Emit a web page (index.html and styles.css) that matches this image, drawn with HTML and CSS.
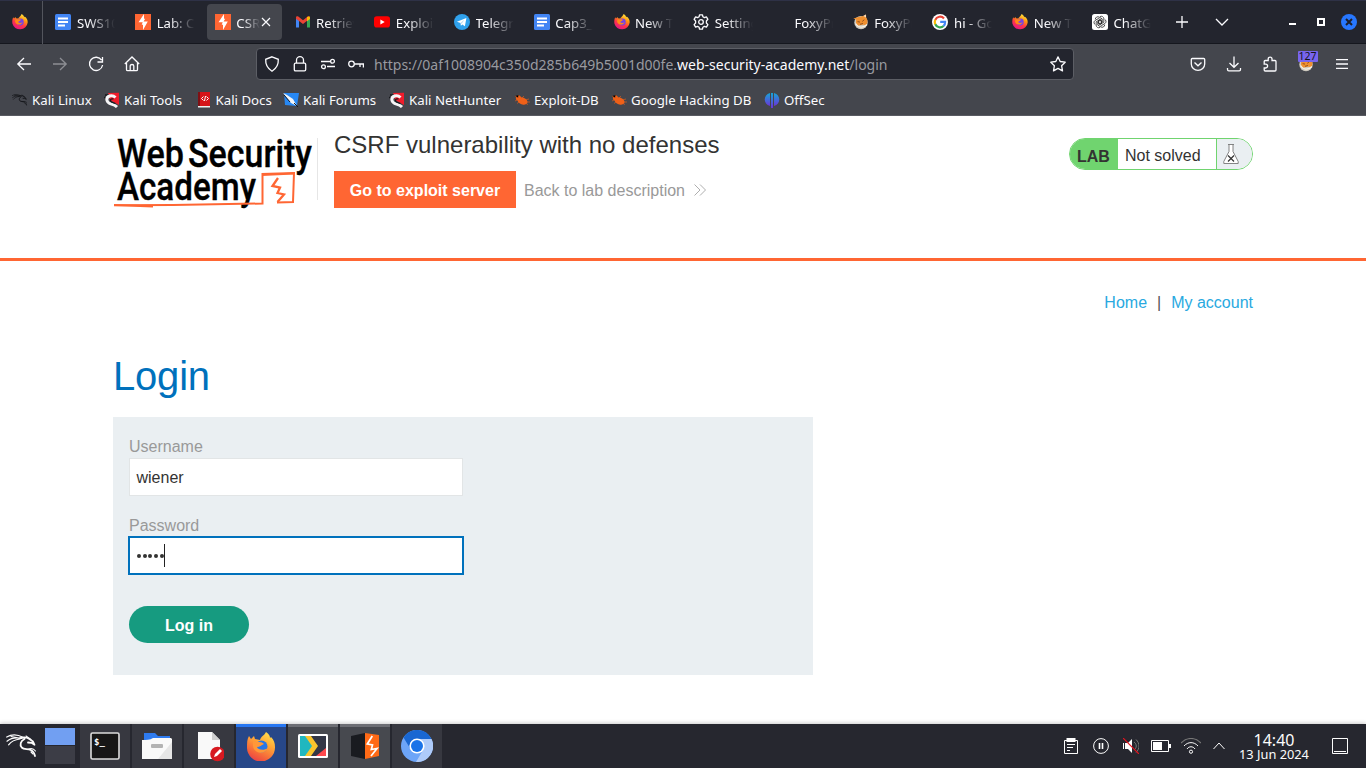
FILE: index.html
```html
<!DOCTYPE html>
<html lang="en">
<head>
<meta charset="utf-8">
<title>CSRF vulnerability with no defenses</title>
<link rel="stylesheet" href="styles.css">
</head>
<body>
<svg class="sprite" aria-hidden="true">
<defs>
<linearGradient id="fxg" x1=".8" y1="0" x2=".3" y2="1"><stop offset="0" stop-color="#fff44f"/><stop offset=".35" stop-color="#ff980e"/><stop offset=".65" stop-color="#ff3647"/><stop offset="1" stop-color="#e31587"/></linearGradient>
<linearGradient id="fxb" x1=".8" y1="0" x2=".3" y2="1"><stop offset="0" stop-color="#ffe14c"/><stop offset=".4" stop-color="#ffa436"/><stop offset=".8" stop-color="#f4603b"/><stop offset="1" stop-color="#e8424a"/></linearGradient>
<linearGradient id="offg" x1="0" y1="0" x2="0" y2="1"><stop offset="0" stop-color="#16a5d8"/><stop offset="1" stop-color="#6a35d8"/></linearGradient>
<symbol id="firefox" viewBox="0 0 16 16"><path fill="url(#fxg)" d="M1.2 3.2 2 4.4 3.5 3 4 4.2 6.2 4.6C7.3 2.6 8.6 2.6 9.6 0c1.7 1 2.3 2.2 2.7 3.3l.4-.8c2.2 1.6 3.1 3.8 3 6A7.8 7.8 0 0 1 .4 9.5C.1 7.2.3 5 1.2 3.2Z"/><circle cx="8.300" cy="8" r="3.400" fill="#7542e5"/><path fill="#ff8a16" d="M3.500 5.400 6.500 5.300c1.500-.3 2.100.3 2.500.8-1 .4-1.600 1.600-2.900 1.700.5 1.500 3 1.500 4.500.4-1.500 3.600-7 3-7.600-.7Z"/></symbol>
<symbol id="firefox-flat" viewBox="0 0 30 30"><path fill="url(#fxb)" d="M3 5l2 3 3-3 1 3 5 1c1-4 4-4 6-8 3 2 4 4 4 6l1-1c3 3 4 6 4 10A14 14 0 0 1 1 17C1 12 1 8 3 5Z"/><circle cx="15.500" cy="15.500" r="6" fill="#2877e8"/><path fill="#ff9838" d="M7 10l5 1c4 0 5 1 6 2-3 1-4 3-7 3 1 3 7 4 11 1-3 7-14 6-15-2Z"/></symbol>
<symbol id="gdoc" viewBox="0 0 16 16"><rect width="16" height="16" rx="1.5" fill="#4285f4"/><path d="M3 4.500h10M3 8h10M3 11.500h7" stroke="#fff" stroke-width="1.800"/></symbol>
<symbol id="burp" viewBox="0 0 16 16"><rect width="16" height="16" fill="#ff6633"/><path d="M9 0 3.500 8.300H7.700L6.700 10.800H8V16L12.800 7.400H8.600L10.200 4.800H9Z" fill="#fff"/></symbol>
<symbol id="gmail" viewBox="0 0 16 16"><path d="M1 13.500V4l3 2.300v7.200z" fill="#4285f4"/><path d="M12 13.500V6.300L15 4v9.500z" fill="#34a853"/><path d="M1 3.500C1 2 2.500 2 3.300 2.600L8 6.200l4.700-3.600c.8-.6 2.300-.6 2.300.9v1L8 10 1 4.700Z" fill="#ea4335"/><path d="M12 3.100c1-.9 3-1.100 3 .6V5l-3 2.300z" fill="#fbbc04"/></symbol>
<symbol id="youtube" viewBox="0 0 16 16"><rect y="2.300" width="16" height="11.200" rx="2.800" fill="#f00"/><path d="M6.400 5.500v5L10.700 8z" fill="#fff"/></symbol>
<symbol id="telegram" viewBox="0 0 16 16"><circle cx="8" cy="8" r="8" fill="#30a1ec"/><path d="M2.900 7.800 12.400 4l-1.500 8.300-2.600-1.900-1.400 1.400-.4-2.700Z" fill="#fff"/><path d="m6.500 9 3.800-3.200-2.600 3.900z" fill="#b8d8ed"/></symbol>
<symbol id="gear" viewBox="0 0 16 16"><g fill="none" stroke="#fbfbfe" stroke-width="1.300" stroke-linejoin="round"><circle cx="8" cy="8" r="2.300"/><path d="m6.500.8h3l.4 2 1.500.8 2-.8 1.500 2.500L13.400 7v2l1.500 1.600-1.500 2.500-2-.700-1.500.8-.4 2h-3l-.4-2-1.500-.8-2 .7-1.500-2.500L2.600 9V7L1.100 5.300l1.500-2.500 2 .8 1.500-.8Z"/></g></symbol>
<symbol id="foxy" viewBox="0 0 16 16"><circle cx="8" cy="8.600" r="6.700" fill="#cfcac0"/><path d="M.3 4.600 5.500 3 10.200 2 13 .4 13.200 3.400C15.200 6 14.800 10 12.500 12 10.500 8.500 6 13.500 3.500 10.200 2.500 9 3.200 6.500 3.200 5.600Z" fill="#f09030"/><path d="M10.200 2 13 .4v3Z" fill="#f4dcc0"/><path d="m4.600 7.600 2.400.5M9.300 7.400l2-1.700M7 10.300l3-.8" stroke="#8a4a18" stroke-width=".9"/><path d="M2.500 9.500c2.500 4.500 8 4.800 11.500 1" fill="none" stroke="#f8efe0" stroke-width="1.200"/></symbol>
<symbol id="google" viewBox="0 0 16 16"><circle cx="8" cy="8" r="8" fill="#fff"/><g fill="none" stroke-width="2.200"><path d="M12 4.400A5.200 5.200 0 0 0 3.300 5.900" stroke="#ea4335"/><path d="M3.300 5.700a5.200 5.200 0 0 0 0 4.700" stroke="#fbbc05"/><path d="M3.300 10.200a5.200 5.200 0 0 0 8.300 1.800" stroke="#34a853"/><path d="M11.500 12c1.200-1 1.700-2.500 1.600-4.100H8.200" stroke="#4285f4"/></g></symbol>
<symbol id="gpt" viewBox="0 0 16 16"><rect width="16" height="16" rx="2.500" fill="#fff"/><g fill="none" stroke="#222" stroke-width=".75"><path id="petal" d="M8 2.600c1.600-1 3.800.1 3.800 2.200v3.500L8.700 10 5.500 8.200"/><use href="#petal" transform="rotate(60 8 8)"/><use href="#petal" transform="rotate(120 8 8)"/><use href="#petal" transform="rotate(180 8 8)"/><use href="#petal" transform="rotate(240 8 8)"/><use href="#petal" transform="rotate(300 8 8)"/></g></symbol>
<symbol id="dragon" viewBox="0 0 32 28"><g fill="none" stroke="currentColor" stroke-linecap="round" stroke-linejoin="round"><path stroke-width="1.200" d="M.7 5C5 2.400 11 2 17 5.300M1 9.200C5 6 10 5.200 16 6.500M2.600 12.800C5 9.500 9 7.500 14 7M5 4.500l8 1.500"/><path stroke-width="1.800" d="M14 6c4-1.200 7-.8 9 .8l4 2.700 1.500 3.300-3-2-3.500-.3M18.500 7c-4 2-5 6-2.800 8.500 2.500 2.500 6 .7 9 2.500 2.500 1.200 3.800 3.500 4.300 6"/><path stroke-width="1.100" d="M20 4l5 3.500M22 17.500c3-1.500 6-.5 7.500 1.500M25 20l2 2"/></g></symbol>
<symbol id="ktool" viewBox="0 0 16 16"><path d="m4 1 11-.2V13L6 8Z" fill="#ef1c2b"/><path d="M1 3h4M0 5.500h3" stroke="#17181d" stroke-width="1.500"/><path d="M11.500 5.500C8 2 2 4 3 8.500 4 13 9 11 13 15" fill="none" stroke="#f5f5f7" stroke-width="3"/><path d="M9.500 7c-3.500-1-4 2.500-1 3.500l3 1" fill="none" stroke="#17181d" stroke-width="1.200"/></symbol>
<symbol id="kdocs" viewBox="0 0 14 16"><path d="M1 0h12v14H1z" fill="#d51419"/><path d="M1 0h2v15H1z" fill="#801014"/><path d="M1 14h12v1.500H1z" fill="#eee"/><path d="m6.500 4.500-2 2 2 2m3-4 2 2-2 2M8.500 4 7.500 9" stroke="#fff" fill="none"/></symbol>
<symbol id="kforum" viewBox="0 0 16 16"><path d="M1 1h15L14 14 2 13Z" fill="#2788f4"/><path d="m0 1 4 2 6 4 4 7-6-3-4-5z" fill="#f2f5f8"/><path d="m1 3 6 7M11 11l4 4" stroke="#16181d"/></symbol>
<symbol id="bug" viewBox="0 0 16 16"><g fill="#ef6018"><ellipse cx="8.500" cy="9" rx="5.200" ry="3.400" transform="rotate(20 8.500 9)"/><circle cx="4.500" cy="6" r="2.600"/></g><path d="m1 4 3 2L5 3m3 3 2-2m1 4 4-1m-2 3 3 0M3 8 1 9m4 1-2 1.500m6 0v1m3-1 2 1" stroke="#ef6018" stroke-width=".6"/></symbol>
<symbol id="offsec" viewBox="0 0 16 16"><g fill="url(#offg)"><path d="M6 1v13C-1 12-1 3 6 1Z"/><path d="M7 1h2v15H7z"/><path d="M10 1v13c7-2 7-11 0-13Z"/></g></symbol>
</defs>
</svg>

<header class="browser">
 <div class="tabs">
  <div class="pinned"><svg class="i16"><use href="#firefox"/></svg></div>
  <div class="tab"><svg class="i16"><use href="#gdoc"/></svg><span>SWS101</span></div>
  <div class="tab"><svg class="i16"><use href="#burp"/></svg><span>Lab: CSRF</span></div>
  <div class="tab active"><svg class="i16"><use href="#burp"/></svg><span class="short">CSRF</span><svg class="close" viewBox="0 0 10 10"><path d="m1 1 8 8m0-8-8 8"/></svg></div>
  <div class="tab"><svg class="i16"><use href="#gmail"/></svg><span>Retrieve</span></div>
  <div class="tab"><svg class="i16"><use href="#youtube"/></svg><span>Exploit</span></div>
  <div class="tab"><svg class="i16"><use href="#telegram"/></svg><span>Telegram</span></div>
  <div class="tab"><svg class="i16"><use href="#gdoc"/></svg><span>Cap3_s</span></div>
  <div class="tab"><svg class="i16"><use href="#firefox"/></svg><span>New Tab</span></div>
  <div class="tab"><svg class="i16"><use href="#gear"/></svg><span>Settings</span></div>
  <div class="tab"><svg class="i16"></svg><span>FoxyProxy</span></div>
  <div class="tab"><svg class="i16"><use href="#foxy"/></svg><span>FoxyProxy</span></div>
  <div class="tab"><svg class="i16"><use href="#google"/></svg><span>hi - Google</span></div>
  <div class="tab"><svg class="i16"><use href="#firefox"/></svg><span>New Tab</span></div>
  <div class="tab"><svg class="i16"><use href="#gpt"/></svg><span>ChatGPT</span></div>
  <div class="tabtools">
   <svg class="line" width="12" height="12" viewBox="0 0 12 12"><path d="M6 0v12M0 6h12"/></svg>
   <svg class="line chev" width="14" height="8" viewBox="0 0 14 8"><path d="m1 1 6 6 6-6"/></svg>
  </div>
  <div class="winctl">
   <i class="min"></i><i class="max"></i>
   <svg width="16" height="16" viewBox="0 0 16 16"><circle cx="8" cy="8" r="8" fill="#2777ff"/><path d="m5 5 6 6m0-6-6 6" stroke="#1d1f29" stroke-width="2"/></svg>
  </div>
 </div>

 <div class="toolbar">
  <div class="tb"><svg class="line i16" viewBox="0 0 16 16"><path d="M15 8H2m6-6L1.800 8 8 14"/></svg></div>
  <div class="tb dim"><svg class="line i16" viewBox="0 0 16 16"><path d="M1 8h13M8 2l6.200 6L8 14"/></svg></div>
  <div class="tb"><svg class="line i16" viewBox="0 0 16 16"><path d="M13.600 4.200A6.600 6.600 0 1 0 14.600 9M14.500 1v5h-5"/></svg></div>
  <div class="tb"><svg class="line i16" viewBox="0 0 16 16"><path d="M.8 8 8 1l7.200 7M2.500 7v6.500c0 .8.500 1.200 1.200 1.200h8.600c.7 0 1.200-.4 1.200-1.200V7M6.200 14.500V10c0-2 3.600-2 3.600 0v4.500"/></svg></div>
  <div class="urlbar">
   <svg class="line i16" viewBox="0 0 16 16"><path d="m8 .8 6.300 2.500c.3 5-1.600 9-6.300 11.900C3.300 12.300 1.400 8.300 1.700 3.300Z"/></svg>
   <svg class="line i16" viewBox="0 0 16 16"><path d="M4.500 7V4.200a3.500 3.500 0 0 1 7 0V7M3.500 7.200h9c.8 0 1.200.5 1.200 1.200v5.200c0 .8-.4 1.300-1.200 1.300h-9c-.8 0-1.200-.5-1.200-1.300V8.400c0-.7.400-1.200 1.200-1.200Z"/></svg>
   <svg class="line i16" viewBox="0 0 16 16"><path d="M1 5.500h9M7 10.500h8"/><circle cx="12.500" cy="5.200" r="1.900"/><circle cx="3.500" cy="10.800" r="1.900"/></svg>
   <svg class="line i16 key" viewBox="0 0 16 16"><circle cx="3.500" cy="8" r="2.800"/><path d="M6.300 8H15.400v3.500M12 8v3"/></svg>
   <div class="url">https://0af1008904c350d285b649b5001d00fe.<b>web-security-academy.net</b>/login</div>
   <svg class="line i16 star" viewBox="0 0 16 16"><path stroke-linejoin="round" d="m8 .9 2.200 4.600 5 .7-3.600 3.500.9 5.200L8 12.400l-4.500 2.500.9-5.200L.8 6.200l5-.7Z"/></svg>
  </div>
  <div class="tb ext"><svg class="line i16" viewBox="0 0 16 16"><path d="M2.300 2.500h11.400c.7 0 1 .4 1 1V8a6.700 6.300 0 0 1-13.400 0V3.500c0-.6.300-1 1-1ZM4.500 6.500 8 9.800l3.500-3.300"/></svg></div>
  <div class="tb"><svg class="line i16" viewBox="0 0 16 16"><path d="M8 .5V11M3.500 7 8 11.300 12.500 7M1.500 12v1.500c0 .8.500 1.300 1.300 1.300h10.400c.8 0 1.300-.5 1.300-1.300V12"/></svg></div>
  <div class="tb"><svg class="line i16" viewBox="0 0 16 16"><path d="M2.200 8.200V5.500c0-.6.400-1 1-1h3V3c0-2.500 3.800-2.500 3.800 0v1.500h3c.6 0 1 .4 1 1V14c0 .6-.4 1-1 1H3.200c-.6 0-1-.4-1-1v-2h1.500c2.500 0 2.500-3.800 0-3.800Z"/></svg></div>
  <div class="tb foxbtn"><svg class="i16"><use href="#foxy"/></svg><em>127</em></div>
  <div class="tb"><svg class="line" width="12" height="10" viewBox="0 0 12 10"><path d="M0 .6h12M0 5h12M0 9.400h12"/></svg></div>
 </div>

 <div class="bookmarks">
  <div><svg class="i16 black"><use href="#dragon"/></svg>Kali Linux</div>
  <div><svg class="i16"><use href="#ktool"/></svg>Kali Tools</div>
  <div><svg class="i16"><use href="#kdocs"/></svg>Kali Docs</div>
  <div><svg class="i16"><use href="#kforum"/></svg>Kali Forums</div>
  <div><svg class="i16"><use href="#ktool"/></svg>Kali NetHunter</div>
  <div><svg class="i16"><use href="#bug"/></svg>Exploit-DB</div>
  <div><svg class="i16"><use href="#bug"/></svg>Google Hacking DB</div>
  <div><svg class="i16"><use href="#offsec"/></svg>OffSec</div>
 </div>
</header>

<main class="page">
 <div class="labhead">
  <svg class="logo" viewBox="0 0 204 80" width="204" height="80">
   <g class="logotext"><text x="4" y="30" textLength="67" lengthAdjust="spacingAndGlyphs">Web</text><text x="75" y="30" textLength="124" lengthAdjust="spacingAndGlyphs">Security</text><text x="4" y="62.500" textLength="139" lengthAdjust="spacingAndGlyphs">Academy</text></g>
   <g fill="none" stroke="#ff6633" stroke-width="2"><path d="M1 68.300 60 68 149.500 66.500V37L181 36l-1 29-16 .5"/><path d="M1 68 40 69.500"/><path d="m149 38 32-1.500"/><path d="m165 41-5.500 8 7.500 1.500-2.500 5.500 6.500 1.500-6.500 7.500" stroke-width="2.300"/></g>
  </svg>
  <div class="title">
   <h2>CSRF vulnerability with no defenses</h2>
   <div class="actions"><a class="exploit">Go to exploit server</a><a class="back">Back to lab description</a><svg width="12" height="12" viewBox="0 0 12 12"><path d="m.5.500 5.500 5.500L.5 11.500M6 .5 11.500 6 6 11.500" fill="none" stroke="#999" stroke-width=".8"/></svg></div>
  </div>
  <div class="status"><b>LAB</b><span>Not solved</span><div class="flask"><svg width="16" height="20" viewBox="0 0 16 20"><path d="M5 .5h6M6 .5v7L.8 17.500v2h14.400v-2L10 7.500v-7" fill="#fff" stroke="#777" stroke-width=".9"/><path d="m5 11.500 6 6m0-6-6 6" stroke="#333" stroke-width="1.200"/></svg></div></div>
 </div>
 <section class="content">
  <nav><a>Home</a><i>|</i><a>My account</a></nav>
  <h1>Login</h1>
  <form class="login">
   <label>Username</label>
   <div class="field">wiener</div>
   <label>Password</label>
   <div class="field focus"><span class="dots"><s></s><s></s><s></s><s></s><s></s></span><span class="caret"></span></div>
   <div class="submit">Log in</div>
  </form>
 </section>
</main>

<footer class="taskbar">
 <svg class="kali" width="32" height="28"><use href="#dragon"/></svg>
 <div class="pager"><i></i><i></i></div>
 <div class="apps">
  <div><svg width="30" height="28" viewBox="0 0 30 28"><rect x="1" y="1" width="28" height="26" rx="1.500" fill="#171717" stroke="#dcdcdc" stroke-width="1.600"/><text x="4" y="13" class="prompt">$_</text></svg></div>
  <div><svg width="30" height="28" viewBox="0 0 30 28"><path d="M2 1h11l3 3h12v5H2z" fill="#2e7bf0"/><path d="M0 8c4 0 8 0 11-2h18l1 1v20H0z" fill="#f9f9f9"/><path d="M30 10v17H16z" fill="#e6e6e6"/><rect x="9" y="12" width="12" height="4" rx="1" fill="#b3b3b3"/></svg></div>
  <div><svg width="30" height="32" viewBox="0 0 30 32"><path d="M4 2h14l8 8v19H4z" fill="#f9f9f9"/><path d="M18 2v8h8z" fill="#cfcfcf"/><circle cx="23.500" cy="24" r="7.300" fill="#d71920"/><path d="m20 27 1-3 5-5 2 2-5 5z" fill="#fff"/></svg></div>
  <div class="current"><svg width="30" height="30"><use href="#firefox-flat"/></svg></div>
  <div class="open"><svg width="30" height="24" viewBox="0 0 30 24"><rect width="30" height="24" rx="1.500" fill="#fff"/><path d="M2 2h26v20H2z" fill="#333746"/><path d="M2 2h7l7 10-7 10H2z" fill="#20b7bf"/><path d="M7 2h6l7 10-7 10H7l7-10z" fill="#fac42c"/><path d="M28 14v8H18z" fill="#ff4b4f"/></svg></div>
  <div class="open"><svg width="30" height="28" viewBox="0 0 30 28"><path d="m1 4 14-3v26L1 24z" fill="#191b20"/><path d="m15 1 14 2v21l-14 3z" fill="#ff6a16"/><path d="m22.300 4-5 8 5.200 1-1.200 4.500 5.700-1L21 24" fill="none" stroke="#fff" stroke-width="1.700"/></svg></div>
  <div><svg width="32" height="32" viewBox="0 0 32 32"><circle cx="16" cy="16" r="16" fill="#6da5f8"/><path d="M2.500 7.500A16 16 0 0 1 30.500 9H16a7 7 0 0 0-6.500 10z" fill="#1967d2"/><path d="M30.500 9A16 16 0 0 1 15 32l7-12c2-4 0-8-3-11z" fill="#aecbfa"/><circle cx="16" cy="16" r="7.600" fill="#fff"/><circle cx="16" cy="16" r="6" fill="#1a73e8"/></svg></div>
 </div>
 <div class="tray">
  <svg width="14" height="16" viewBox="0 0 14 16"><path d="M.5 2.500h13v13H.5zM3 6.500h8M3 9.500h6M3 12.500h3" class="w"/><path d="M2.500 0h9v4h-9z" fill="#fff"/></svg>
  <svg width="16" height="16" viewBox="0 0 16 16"><circle cx="8" cy="8" r="7.400" class="w"/><path d="M6.500 5v6M9.500 5v6" fill="none" stroke="#fff" stroke-width="1.600"/></svg>
  <svg width="16" height="16" viewBox="0 0 16 16"><path d="M0 5h1v6H0zM2 5h3l4-4v14l-4-4H2z" fill="#fff"/><path d="M11 4c3 2 3 6 0 8M13 1.500c4 4 4 9 0 13" fill="none" stroke="#777"/><path d="M0 0 16 16" fill="none" stroke="#e8121e" stroke-width="1.200"/></svg>
  <svg width="20" height="12" viewBox="0 0 20 12"><path d="M.5.500h17v11H.5z" class="w"/><path d="M2 2h9v8H2zM18 4h2v4h-2z" fill="#fff"/></svg>
  <svg width="20" height="16" viewBox="0 0 20 16"><path d="M0 5C6-1 14-1 20 5" fill="none" stroke="#777" stroke-width="1.200"/><path d="M3 8c4-4.500 10-4.500 14 0M6 11c2-3 6-3 8 0" class="w"/><circle cx="10" cy="13.700" r="1.600" class="w"/></svg>
  <svg width="12" height="8" viewBox="0 0 12 8"><path d="m.5 7 5.500-6L11.500 7" class="w"/></svg>
 </div>
 <div class="clock"><strong>14:40</strong><small>13 Jun 2024</small></div>
 <svg class="desk" width="16" height="16" viewBox="0 0 16 16"><path d="M.5.500h15v15H.5zM2 13.500h12" class="w"/></svg>
</footer>
</body>
</html>
```
FILE: styles.css
```css
* { box-sizing: border-box; }
body { margin: 0; width: 1366px; height: 768px; overflow: hidden; display: flex; flex-direction: column; background: #fff; color: #333332; font: 16px "Liberation Sans", Arial, sans-serif; }
svg { display: block; flex: none; }
.sprite { position: absolute; width: 0; height: 0; }
.i16 { width: 16px; height: 16px; }
.line { fill: none; stroke: #fbfbfe; stroke-width: 1.3; }
.browser { height: 116px; flex: none; background: #44464d; color: #fbfbfe; font-family: "Noto Sans", sans-serif; border-bottom: 1px solid #595b62; }
.tabs { height: 44px; display: flex; align-items: center; background: #23252e; border-top: 1px solid #2e3146; border-bottom: 1px solid #15171e; }
.pinned { width: 43px; height: 43px; padding: 13px 0 0 12px; border-right: 1px solid #53555d; margin-right: 4.4px; }
.tab { width: 75.8px; margin-right: 3.95px; height: 36px; padding-left: 8px; display: flex; align-items: center; flex: none; font-size: 13.2px; border-radius: 4px; }
.tab span { width: 38px; margin-left: 5.5px; margin-top: 2px; overflow: hidden; white-space: nowrap; -webkit-mask-image: linear-gradient(90deg, #000 30%, transparent); mask-image: linear-gradient(90deg, #000 30%, transparent); }
.tab .short { width: 24px; }
.tab.active { background: #44464d; width: 75px; margin-right: 4.75px; }
.close { width: 10px; height: 10px; margin-left: .5px; stroke: #fbfbfe; stroke-width: 1.2; }
.tabtools { display: flex; align-items: center; margin-left: 12px; gap: 27px; }
.winctl { display: flex; align-items: center; margin-left: 60.6px; }
.min { width: 7px; height: 2px; background: #fff; margin: 4px 21px 0 0; }
.max { width: 8px; height: 8px; border: 2px solid #fff; margin-right: 16px; }
.toolbar { height: 40px; display: flex; align-items: center; padding-left: 6px; }
.tb { width: 36px; display: flex; justify-content: center; position: relative; }
.dim { opacity: .4; }
.ext { margin-left: 106px; }
.urlbar { width: 818px; height: 32px; margin-left: 106px; border: 1px solid #5c5e65; border-radius: 4px; background: #23252e; display: flex; align-items: center; padding-left: 7px; gap: 12px; }
.url { width: 664px; font-size: 14.02px; color: #999aa0; white-space: nowrap; margin-left: -2px; }
.url b { color: #fbfbfe; font-weight: 400; }
.foxbtn em { position: absolute; left: 9.5px; top: -5px; width: 20px; height: 11px; background: #7865ee; border-radius: 1px; color: #15141a; font: 10.5px/11px "Noto Sans", sans-serif; text-align: center; }
.bookmarks { display: grid; grid-template-columns: 92px 91.5px 87.5px 106px 125px 97px 153px 90px; padding-left: 12px; height: 32px; align-items: center; font-size: 13.25px; white-space: nowrap; }
.bookmarks div { display: flex; align-items: center; gap: 4px; }
.black { color: #111216; }
.page { flex: 1; min-height: 0; }
.labhead { height: 145px; border-bottom: 3px solid #ff6633; padding: 22px 113px 0; display: flex; align-items: flex-start; }
.logo { width: 204px; height: 80px; margin-top: -1px; }
.logotext { font: 500 39px Roboto, sans-serif; fill: #000; stroke: #000; stroke-width: .35px; }
.title { border-left: 1px solid #e6e6e6; height: 62px; padding-left: 16px; }
.title h2 { font-size: 24px; font-weight: 400; line-height: 28px; margin: -7px 0 11px; white-space: nowrap; }
.actions { display: flex; align-items: flex-start; color: #999; white-space: nowrap; height: 38px; }
.actions svg { margin-top: 14px; }
.exploit { width: 182px; height: 37px; line-height: 39px; background: #ff6633; color: #fff; font-weight: 700; text-align: center; margin: 1px 8px 0 0; }
.back { width: 170px; line-height: 41px; }
.status { margin-left: auto; width: 184px; height: 32px; border: 1px solid #70d46f; border-radius: 16px; display: flex; overflow: hidden; line-height: 34px; }
.status b { width: 48px; background: #70d46f; padding-left: 7px; line-height: 35px; }
.status span { width: 99px; padding-left: 7px; border-right: 1px solid #70d46f; }
.flask { flex: 1; background: #eaeff2; padding: 5px 0 0 6px; }
.content { padding: 32px 113px 0; }
nav { display: flex; justify-content: flex-end; color: #29a9df; line-height: 20px; }
nav i { color: #555; font-style: normal; margin: 0 10px; }
h1 { margin: 38px 0 16px; font-size: 40px; line-height: 50px; font-weight: 400; letter-spacing: -.2px; color: #0071bc; }
.login { width: 700px; height: 258px; padding: 20px 16px; background: #eaeff2; }
label { display: block; height: 21px; line-height: 20px; color: #999; }
.field { width: 334px; height: 38px; margin-bottom: 20px; padding: 2px 6.5px 0; border: 1px solid #e2e5e6; background: #fff; display: flex; align-items: center; }
.field.focus { outline: 2px solid #0071bc; outline-offset: -2px; width: 336px; height: 39px; margin: -1px -1px 31px; border: 0; padding: 0 0 0 9px; }
.dots { display: flex; gap: 1.7px; }
.dots s { width: 4px; height: 4px; border-radius: 50%; background: #333332; }
.caret { width: 1px; height: 23px; background: #222; }
.submit { width: 120px; height: 37px; line-height: 39px; border-radius: 19px; background: #169b80; color: #fff; text-align: center; font-weight: 700; }
.taskbar { height: 44px; flex: none; background: #26272f; color: #fcfcfc; display: flex; align-items: center; font-family: "Noto Sans", sans-serif; box-shadow: 0 -1px 4px rgba(0,0,0,.2); }
.kali { margin: 0 7px 0 6px; width: 32px; }
.pager { width: 30px; height: 36px; display: grid; grid-template-rows: 17px 18px; gap: 1px; }
.pager i { background: #3c3d46; }
.pager i:first-child { background: #719ff2; }
.apps { display: flex; gap: 2px; margin-left: 5px; }
.apps div { width: 50px; height: 44px; background: #373840; display: flex; align-items: center; justify-content: center; }
.apps .open { background: #47494f; box-shadow: inset 0 3px #6d6e74; }
.apps .current { background: #274788; box-shadow: inset 0 3px #2777f2; }
.prompt { font: 700 9px "DejaVu Sans Mono", monospace; fill: #fff; }
.tray { display: grid; grid-template-columns: repeat(5, 30px) 26px; justify-items: center; align-items: center; margin-left: 614px; }
.w { fill: none; stroke: #fcfcfc; stroke-width: 1; }
.clock { width: 84px; text-align: center; white-space: nowrap; }
.clock strong { display: block; font-size: 16px; font-weight: 400; line-height: 16px; }
.clock small { display: block; font-size: 12.8px; line-height: 13px; }
.desk { margin-left: 16px; }
```
